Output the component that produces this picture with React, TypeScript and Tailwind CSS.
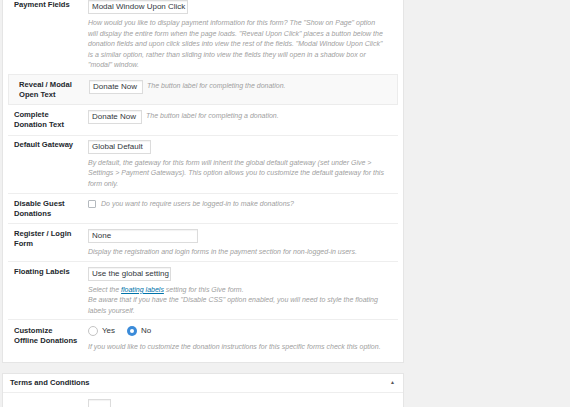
import type { ReactNode } from "react";

const desc = "text-[7px] italic leading-[10.5px] text-[#a0a0a0]";
const input =
  "flex h-[14px] items-center overflow-hidden whitespace-nowrap border border-[#dcdcdc] bg-white px-[3px] text-[8px] text-[#32373c] shadow-[inset_0_1px_1px_rgba(0,0,0,0.05)]";

function Row({
  label,
  children,
  className = "",
  labelClass = "pl-[6px]",
}: {
  label: ReactNode;
  children: ReactNode;
  className?: string;
  labelClass?: string;
}) {
  return (
    <div className={`flex ${className}`}>
      <div className={`w-[80px] shrink-0 text-[7.6px] font-bold leading-[10px] text-[#23282d] ${labelClass}`}>
        {label}
      </div>
      <div className="min-w-0 flex-1 pr-[6px]">{children}</div>
    </div>
  );
}

function Radio({ checked, label }: { checked?: boolean; label: string }) {
  return (
    <span className="flex items-center gap-[4px]">
      {checked ? (
        <span className="flex h-[10px] w-[10px] items-center justify-center rounded-full bg-[#3b8bd9]">
          <span className="h-[4px] w-[4px] rounded-full bg-white" />
        </span>
      ) : (
        <span className="h-[10px] w-[10px] rounded-full border border-[#c4c4c4] bg-white" />
      )}
      <span className="text-[8px] text-[#32373c]">{label}</span>
    </span>
  );
}

export default function App() {
  return (
    <div className="h-[407px] w-[570px] overflow-hidden bg-[#f1f1f1] font-['Liberation_Sans',Arial,sans-serif]">
      <div className="ml-[2px] w-[402px] border-x border-b border-[#e5e5e5] bg-white">
        <div className="ml-[5px] w-[390px] pb-[9px]">
          <Row label="Payment Fields" className="pb-[3px]">
            <div className={`${input} w-[100px]`}>Modal Window Upon Click</div>
            <p className={`${desc} mt-[4px] whitespace-nowrap`}>
              How would you like to display payment information for this form? The "Show on Page" option
              <br />
              will display the entire form when the page loads. "Reveal Upon Click" places a button below the
              <br />
              donation fields and upon click slides into view the rest of the fields. "Modal Window Upon Click"
              <br />
              is a similar option, rather than sliding into view the fields they will open in a shadow box or
              <br />
              "modal" window.
            </p>
          </Row>

          <Row
            label={
              <>
                Reveal / Modal
                <br />
                Open Text
              </>
            }
            labelClass="pl-[10px]"
            className="border border-[#ececec] bg-[#f9f9f9] pb-[4px] pt-[5px]"
          >
            <div className="flex items-center gap-[4px]">
              <div className={`${input} w-[54px]`}>Donate Now</div>
              <span className={desc}>The button label for completing the donation.</span>
            </div>
          </Row>

          <Row
            label={
              <>
                Complete
                <br />
                Donation Text
              </>
            }
            className="pb-[5px] pt-[5px]"
          >
            <div className="flex items-center gap-[4px]">
              <div className={`${input} w-[54px]`}>Donate Now</div>
              <span className={desc}>The button label for completing a donation.</span>
            </div>
          </Row>

          <Row label="Default Gateway" className="border-t border-[#eeeeee] pb-[4px] pt-[4px]">
            <div className={`${input} w-[63px]`}>Global Default</div>
            <p className={`${desc} mt-[4px]`}>
              By default, the gateway for this form will inherit the global default gateway (set under Give &gt;
              Settings &gt; Payment Gateways). This option allows you to customize the default gateway for this
              form only.
            </p>
          </Row>

          <Row
            label={
              <>
                Disable Guest
                <br />
                Donations
              </>
            }
            className="border-t border-[#eeeeee] pb-[4px] pt-[5px]"
          >
            <div className="flex items-center gap-[5px]">
              <span className="h-[8px] w-[8px] rounded-[1px] border border-[#b4b9be] bg-white" />
              <span className={desc}>Do you want to require users be logged-in to make donations?</span>
            </div>
          </Row>

          <Row
            label={
              <>
                Register / Login
                <br />
                Form
              </>
            }
            className="border-t border-[#eeeeee] pb-[3px] pt-[5px]"
          >
            <div className={`${input} w-[110px]`}>None</div>
            <p className={`${desc} mt-[4px]`}>
              Display the registration and login forms in the payment section for non-logged-in users.
            </p>
          </Row>

          <Row label="Floating Labels" className="border-t border-[#eeeeee] pb-[3px] pt-[5px]">
            <div className={`${input} w-[83px]`}>Use the global setting</div>
            <p className={`${desc} mt-[4px]`}>
              Select the <span className="text-[#0073aa] underline">floating labels</span> setting for this Give
              form.
              <br />
              Be aware that if you have the "Disable CSS" option enabled, you will need to style the floating
              labels yourself.
            </p>
          </Row>

          <Row
            label={
              <>
                Customize
                <br />
                Offline Donations
              </>
            }
            className="border-t border-[#eeeeee] pt-[6px]"
          >
            <div className="flex h-[10px] items-center gap-[12px]">
              <Radio label="Yes" />
              <Radio checked label="No" />
            </div>
            <p className={`${desc} mt-[6px]`}>
              If you would like to customize the donation instructions for this specific forms check this option.
            </p>
          </Row>
        </div>
      </div>

      <div className="ml-[2px] mt-[10px] w-[402px] border border-[#e5e5e5] bg-white">
        <div className="flex h-[19px] items-center justify-between border-b border-[#eeeeee] pl-[7px] pr-[8px]">
          <span className="text-[7.6px] font-bold text-[#23282d]">Terms and Conditions</span>
          <span className="text-[5px] text-[#555]">▲</span>
        </div>
        <div className="pl-[85px] pt-[6px]">
          <div className={`${input} w-[23px]`} />
        </div>
      </div>
    </div>
  );
}
